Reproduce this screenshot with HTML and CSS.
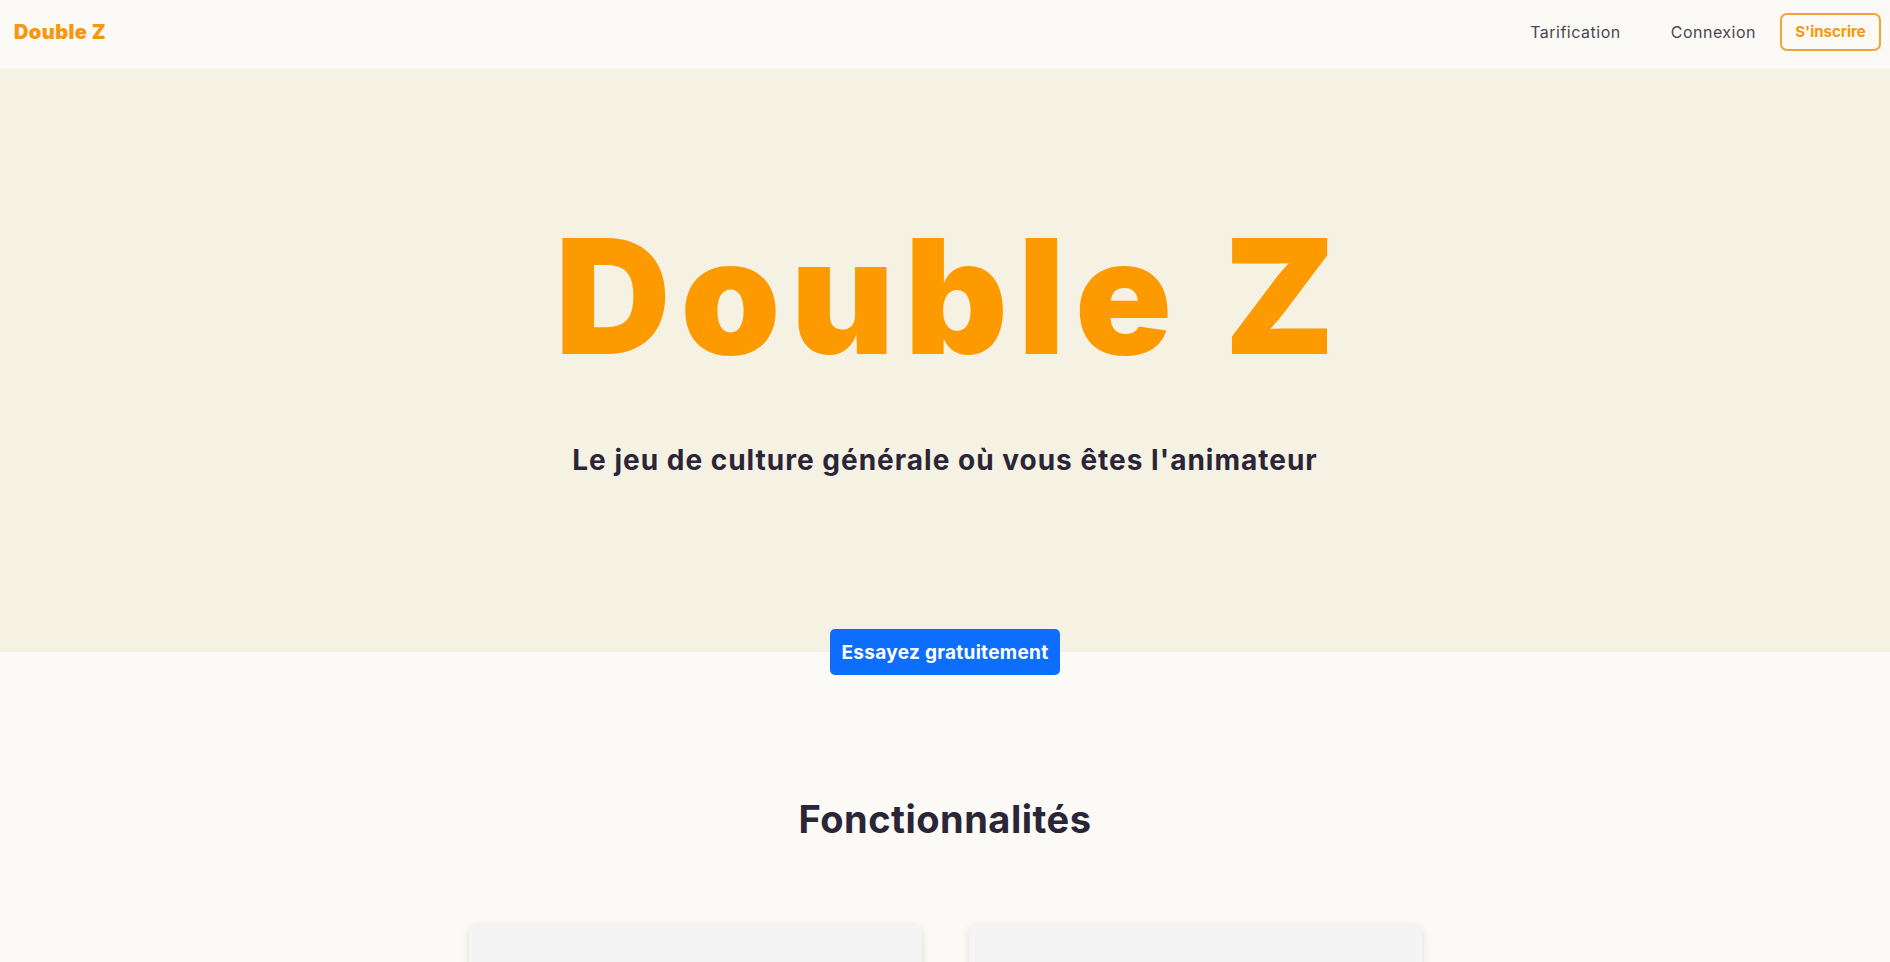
FILE: index.html
```html
<!DOCTYPE html>
<html lang="fr">
<head>
<meta charset="utf-8">
<title>Double Z</title>
<link rel="stylesheet" href="styles.css">
</head>
<body>
<header class="topbar">
  <a class="brand" href="#">Double Z</a>
  <nav class="nav">
    <a class="nav-link" href="#">Tarification</a>
    <a class="nav-link" href="#">Connexion</a>
    <a class="nav-cta" href="#">S'inscrire</a>
  </nav>
</header>
<section class="hero">
  <h1 class="hero-title">Double Z</h1>
  <p class="hero-sub">Le jeu de culture générale où vous êtes l'animateur</p>
</section>
<div class="cta-wrap">
  <a class="cta" href="#">Essayez gratuitement</a>
</div>
<section class="features">
  <h2 class="features-title">Fonctionnalités</h2>
  <div class="cards">
    <div class="card"></div>
    <div class="card"></div>
  </div>
</section>
</body>
</html>
```
FILE: styles.css
```css
* { box-sizing: border-box; }
html, body { margin: 0; padding: 0; }
body {
  background: #fbfaf6;
  font-family: Inter, "Noto Sans", "DejaVu Sans", sans-serif;
  color: #2a2537;
}
a { text-decoration: none; }

.topbar {
  height: 69px;
  display: flex;
  align-items: center;
  justify-content: space-between;
  padding: 0 9px 6px 14px;
  background: #fbfaf6;
}
.brand {
  color: #f7960f;
  font-weight: 900;
  font-size: 20px;
  letter-spacing: 0.4px;
}
.nav {
  display: flex;
  align-items: center;
}
.nav-link {
  color: #4a4650;
  font-size: 16px;
  letter-spacing: 0.5px;
  margin-right: 50px;
}
.nav-link:nth-child(2) { margin-right: 24px; }
.nav-cta {
  display: inline-flex;
  align-items: center;
  justify-content: center;
  width: 101px;
  height: 38px;
  border: 2px solid #f3a33d;
  border-radius: 7px;
  color: #f7960f;
  font-weight: 700;
  font-size: 15px;
}

.hero {
  background: #f5f1e3;
  height: 583px;
  padding-top: 147px;
  text-align: center;
}
.hero-title {
  margin: 0;
  color: #fd9a00;
  font-weight: 900;
  font-size: 160px;
  line-height: 1;
  letter-spacing: 10px;
  padding-left: 10px;
}
.hero-sub {
  margin: 67px 0 0;
  font-size: 28px;
  font-weight: 700;
  letter-spacing: 1px;
  color: #2a2537;
}

.cta-wrap {
  display: flex;
  justify-content: center;
  margin-top: -23px;
}
.cta {
  display: inline-flex;
  align-items: center;
  justify-content: center;
  width: 230px;
  height: 46px;
  background: #0d6efd;
  color: #fff;
  font-weight: 700;
  font-size: 19px;
  letter-spacing: 0.3px;
  border-radius: 5px;
}

.features {
  padding-top: 121px;
  text-align: center;
}
.features-title {
  margin: 0;
  font-size: 38px;
  font-weight: 700;
  letter-spacing: 0.5px;
  color: #2a2537;
}
.cards {
  display: flex;
  justify-content: center;
  gap: 47px;
  margin-top: 83px;
  padding-bottom: 60px;
}
.card {
  width: 453px;
  height: 260px;
  background: #f4f4f4;
  border-radius: 8px;
  box-shadow: 0 2px 8px rgba(0,0,0,0.12);
}
```
